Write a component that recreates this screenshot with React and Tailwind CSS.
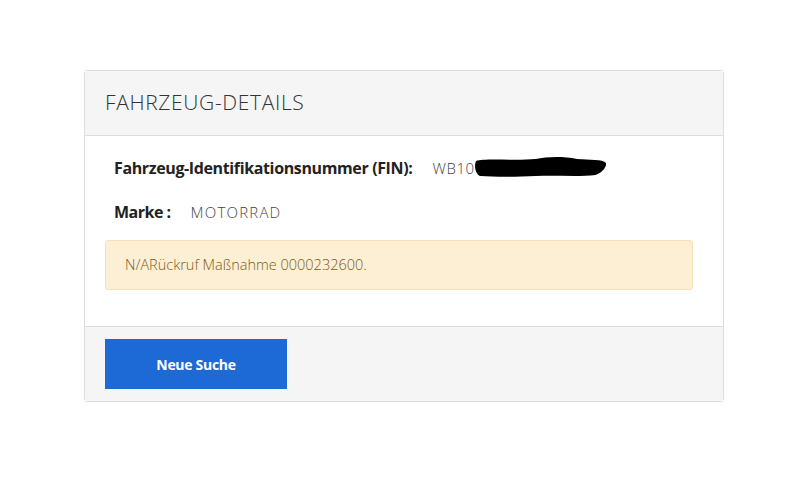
export default function App() {
    return (
        <div className="min-h-screen bg-white pt-[70px] px-[84px] font-['Open_Sans',sans-serif]">
            <div className="w-[640px] border border-[#dddddd] rounded-[3px]">
                <div className="h-[65px] bg-[#f5f5f5] border-b border-[#dddddd] px-[20px] flex items-center">
                    <h1 className="text-[21px] font-light text-[#333] tracking-[0.65px]">FAHRZEUG-DETAILS</h1>
                </div>

                <div className="pl-[20px] pr-[30px] pt-[20px] pb-[36px]">
                    <div className="flex items-center pl-[9px] h-[24px] text-[15px]">
                        <span className="font-bold text-[16px] text-[#222] tracking-[-0.37px]">Fahrzeug-Identifikationsnummer (FIN):</span>
                        <span className="ml-[20px] text-[#444] font-light tracking-[0.6px]">WB10</span>
                        <svg width="134" height="26" viewBox="0 0 130 26" preserveAspectRatio="none" className="-ml-[1px]">
                            <path d="M2 6 C10 3 40 6 60 4 C70 2 85 1 100 4 C112 5 125 4 128 8 C129 12 124 18 118 20 C100 22 80 20 60 21 C40 22 20 22 6 21 C1 19 0 10 2 6 Z" fill="#000" />
                        </svg>
                    </div>
                    <div className="flex items-center pl-[9px] mt-[20px] h-[24px] text-[15px]">
                        <span className="font-bold text-[16px] text-[#222] tracking-[-0.5px]">Marke :</span>
                        <span className="ml-[20px] text-[#444] font-light tracking-[1.2px]">MOTORRAD</span>
                    </div>
                    <div className="mt-[16px] h-[50px] bg-[#fdefd3] border border-[#f6e1b8] rounded-[3px] px-[19px] flex items-center text-[14.5px] text-[#7a5c25] font-light">
                        N/ARückruf Maßnahme 0000232600.
                    </div>
                </div>

                <div className="h-[75px] bg-[#f5f5f5] border-t border-[#dddddd] px-[20px] pt-[12px]">
                    <button className="w-[182px] h-[50px] bg-[#1d6ad6] text-white text-[14px] font-bold tracking-[-0.3px]">Neue Suche</button>
                </div>
            </div>
        </div>
    );
}
